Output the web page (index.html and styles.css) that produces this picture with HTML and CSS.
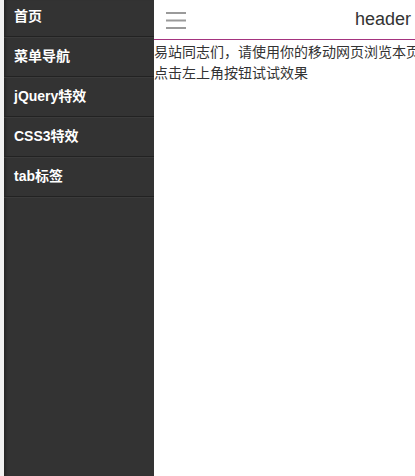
FILE: index.html
```html
<!DOCTYPE html>
<html lang="zh">
<head>
<meta charset="utf-8">
<title>header</title>
<link rel="stylesheet" href="styles.css">
</head>
<body>
<div class="page">
  <div class="gutter"></div>
  <nav class="sidebar">
    <ul class="menu">
      <li class="menu-item">首页</li>
      <li class="menu-item">菜单导航</li>
      <li class="menu-item">jQuery特效</li>
      <li class="menu-item">CSS3特效</li>
      <li class="menu-item">tab标签</li>
    </ul>
  </nav>
  <main class="main">
    <header class="header">
      <svg class="burger" width="20" height="17" viewBox="0 0 20 17">
        <rect x="0" y="0" width="20" height="2" fill="#9a9a9a"/>
        <rect x="0" y="7.5" width="20" height="2" fill="#9a9a9a"/>
        <rect x="0" y="15" width="20" height="2" fill="#9a9a9a"/>
      </svg>
      <span class="title">header</span>
    </header>
    <div class="content">易站同志们，请使用你的移动网页浏览本页，<br>点击左上角按钮试试效果</div>
  </main>
</div>
</body>
</html>
```
FILE: styles.css
```css
html, body {
  margin: 0;
  padding: 0;
  height: 100%;
  overflow: hidden;
  background: #fff;
}
.page {
  display: flex;
  height: 476px;
  width: 415px;
  overflow: hidden;
  font-family: "Liberation Sans", "Noto Sans CJK SC", sans-serif;
}
.gutter {
  width: 4px;
  flex-shrink: 0;
  background: #f1f1f1;
}
.sidebar {
  width: 150px;
  flex-shrink: 0;
  background: #333333;
  box-shadow: inset 4px 0 3px -2px #262626;
  overflow: hidden;
}
.menu {
  list-style: none;
  margin: -3px 0 0 0;
  padding: 0;
}
.menu-item {
  height: 39px;
  line-height: 39px;
  padding-left: 10px;
  color: #ffffff;
  font-size: 14px;
  font-weight: bold;
  border-bottom: 1px solid #222222;
  box-shadow: 0 1px 0 #3b3b3b;
}
.main {
  width: 415px;
  flex-shrink: 0;
}
.header {
  height: 39px;
  border-bottom: 1px solid #a4337f;
  display: flex;
  align-items: center;
  padding-left: 12px;
}
.burger {
  display: block;
  flex-shrink: 0;
  margin-top: 2px;
}
.title {
  margin-left: 169px;
  font-size: 18px;
  color: #333333;
  white-space: nowrap;
}
.content {
  padding-top: 1px;
  font-size: 14px;
  line-height: 21px;
  color: #333333;
  white-space: nowrap;
  font-family: "Noto Sans CJK SC", sans-serif;
}
```
